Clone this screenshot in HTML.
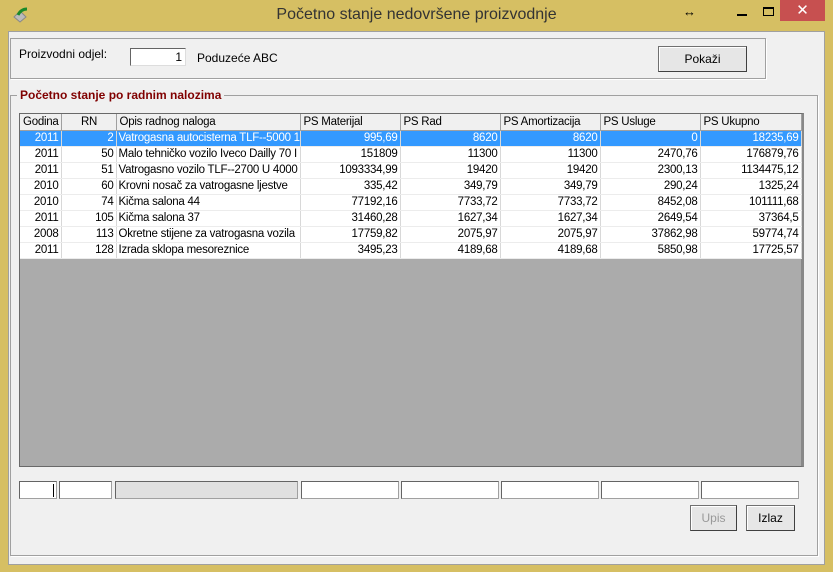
<!DOCTYPE html>
<html><head><meta charset="utf-8"><style>
*{box-sizing:border-box;margin:0;padding:0}
body{width:833px;height:572px;background:#d6bf63;font-family:"Liberation Sans",sans-serif;font-size:12px;position:relative;overflow:hidden;color:#000}
.abs{position:absolute}
#client{left:8px;top:31px;width:817px;height:534px;background:#f0f0f0;border:1px solid #a0a0a0}
.title{left:0;top:6px;width:833px;text-align:center;font-size:16px;color:#333}
.btn{background:#e6e6e6;border:1px solid #707070;border-right-color:#404040;border-bottom-color:#404040;box-shadow:inset 1px 1px 0 #fff;text-align:center;font-size:12px}
table{border-collapse:collapse;font-size:11.5px;letter-spacing:-0.25px}
td,th{height:16px;padding:0 2px;white-space:nowrap;overflow:hidden;border-right:1px solid #d8d8d8;border-bottom:1px solid #ececec}
th{font-weight:normal;text-align:left;background:#f0f0f0;border-right:1px solid #a0a0a0;border-bottom:1px solid #a0a0a0;padding-left:3px}
td{text-align:right;background:#fff}
td.l{text-align:left}
tr.sel td{background:#3399ff;color:#fff}
.inp{background:#fff;border:1px solid #a0a0a0;border-top-color:#646464;border-left-color:#646464;height:18px;top:481px}
</style></head><body>
<div class="abs title">Početno stanje nedovršene proizvodnje</div>
<svg class="abs" style="left:12px;top:6px" width="18" height="18"><path d="M2 11 L8 5 L14 11 L8 16 Z" fill="#bbb" stroke="#888"/><path d="M6 9 Q9 3 15 3" stroke="#1a8a2a" stroke-width="3" fill="none"/></svg>
<div class="abs" style="left:683px;top:4px;font-size:13px">↔</div>
<div class="abs" style="left:737px;top:14px;width:10px;height:2px;background:#000"></div>
<div class="abs" style="left:763px;top:7px;width:11px;height:9px;border:1px solid #000;border-top-width:2px"></div>
<div class="abs" style="left:780px;top:0;width:45px;height:21px;background:#c75050;color:#fff;text-align:center;font-size:15px;line-height:21px">✕</div>
<div id="client" class="abs"></div>
<div class="abs" style="left:10px;top:38px;width:756px;height:41px;border:1px solid #a0a0a0;box-shadow:1px 1px 0 #fff"></div>
<div class="abs" style="left:19px;top:47px">Proizvodni odjel:</div>
<div class="abs" style="left:130px;top:48px;width:56px;height:18px;background:#fff;border:1px solid #646464;border-right-color:#ddd;border-bottom-color:#ddd;text-align:right;padding-right:3px;line-height:16px">1</div>
<div class="abs" style="left:197px;top:51px">Poduzeće ABC</div>
<div class="abs btn" style="left:658px;top:46px;width:89px;height:26px;line-height:24px">Pokaži</div>
<div class="abs" style="left:10px;top:95px;width:808px;height:461px;border:1px solid #a0a0a0;box-shadow:1px 1px 0 #fff"></div>
<div class="abs" style="left:17px;top:88px;padding:0 3px;background:#f0f0f0;color:#800000;font-weight:bold;font-size:12px">Početno stanje po radnim nalozima</div>
<div class="abs" style="left:19px;top:113px;width:785px;height:354px;background:#ababab;border:1px solid #696969;border-right:3px solid #888">
<table style="width:781px;table-layout:fixed">
<colgroup><col style="width:41px"><col style="width:55px"><col style="width:184px"><col style="width:100px"><col style="width:100px"><col style="width:100px"><col style="width:100px"><col style="width:101px"></colgroup>
<tr><th>Godina</th><th style="text-align:center">RN</th><th>Opis radnog naloga</th><th>PS Materijal</th><th>PS Rad</th><th>PS Amortizacija</th><th>PS Usluge</th><th>PS Ukupno</th></tr>
<tr class="sel"><td>2011</td><td>2</td><td class="l">Vatrogasna autocisterna TLF--5000 1-</td><td>995,69</td><td>8620</td><td>8620</td><td>0</td><td>18235,69</td></tr>
<tr><td>2011</td><td>50</td><td class="l">Malo tehničko vozilo  Iveco Dailly 70 I</td><td>151809</td><td>11300</td><td>11300</td><td>2470,76</td><td>176879,76</td></tr>
<tr><td>2011</td><td>51</td><td class="l">Vatrogasno vozilo TLF--2700  U 4000</td><td>1093334,99</td><td>19420</td><td>19420</td><td>2300,13</td><td>1134475,12</td></tr>
<tr><td>2010</td><td>60</td><td class="l">Krovni nosač za vatrogasne ljestve</td><td>335,42</td><td>349,79</td><td>349,79</td><td>290,24</td><td>1325,24</td></tr>
<tr><td>2010</td><td>74</td><td class="l">Kičma salona  44</td><td>77192,16</td><td>7733,72</td><td>7733,72</td><td>8452,08</td><td>101111,68</td></tr>
<tr><td>2011</td><td>105</td><td class="l">Kičma salona 37</td><td>31460,28</td><td>1627,34</td><td>1627,34</td><td>2649,54</td><td>37364,5</td></tr>
<tr><td>2008</td><td>113</td><td class="l">Okretne stijene za vatrogasna vozila</td><td>17759,82</td><td>2075,97</td><td>2075,97</td><td>37862,98</td><td>59774,74</td></tr>
<tr><td>2011</td><td>128</td><td class="l">Izrada sklopa mesoreznice</td><td>3495,23</td><td>4189,68</td><td>4189,68</td><td>5850,98</td><td>17725,57</td></tr>
</table></div>
<div class="abs inp" style="left:19px;width:38px"></div>
<div class="abs" style="left:53px;top:484px;width:1px;height:13px;background:#000"></div>
<div class="abs inp" style="left:59px;width:53px"></div>
<div class="abs inp" style="left:115px;width:183px;background:#e0e0e0"></div>
<div class="abs inp" style="left:301px;width:98px"></div>
<div class="abs inp" style="left:401px;width:98px"></div>
<div class="abs inp" style="left:501px;width:98px"></div>
<div class="abs inp" style="left:601px;width:98px"></div>
<div class="abs inp" style="left:701px;width:98px"></div>
<div class="abs btn" style="left:690px;top:505px;width:47px;height:26px;line-height:24px;color:#999">Upis</div>
<div class="abs btn" style="left:746px;top:505px;width:49px;height:26px;line-height:24px">Izlaz</div>
</body></html>
